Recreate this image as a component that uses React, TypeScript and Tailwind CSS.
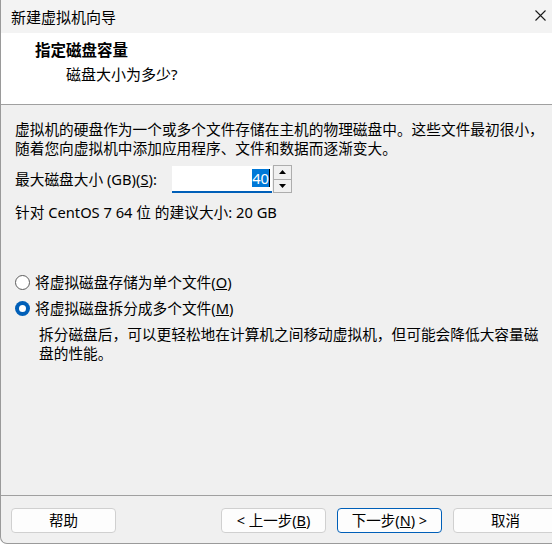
import React from 'react';

const font = { fontFamily: '"Noto Sans", "Noto Sans CJK SC", sans-serif' };

const Radio = ({ checked }: { checked?: boolean }) =>
  checked ? (
    <span className="flex h-[15px] w-[15px] items-center justify-center rounded-full bg-[#005fb8]">
      <span className="h-[7px] w-[7px] rounded-full bg-white"></span>
    </span>
  ) : (
    <span className="h-[15px] w-[15px] rounded-full border border-[#5c5c5c] bg-white"></span>
  );

const Btn = ({ children, focus, className = '' }: { children: React.ReactNode; focus?: boolean; className?: string }) => (
  <div
    className={`flex h-[25px] w-[105px] items-center justify-center rounded-[4px] bg-[#fdfdfd] text-[14.5px] text-black ${
      focus ? 'border border-[#005fb8]' : 'border border-[#d0d0d0]'
    } ${className}`}
  >
    {children}
  </div>
);

const App = () => {
  return (
    <div className="h-[546px] w-[552px] overflow-hidden bg-white" style={font}>
      <div className="flex h-[544px] w-[560px] flex-col overflow-hidden rounded-bl-[7px] border-b border-l border-[#9a9a9a] bg-[#f0f0f0]">
        {/* title bar */}
        <div className="flex h-[33px] shrink-0 items-center justify-between bg-[#f3f3f3] pl-[10px] pr-[14px]">
          <span className="mt-[1px] text-[15px] text-black">新建虚拟机向导</span>
          <svg width="11" height="11" viewBox="0 0 11 11" className="mt-[-3px]">
            <path d="M0.5 0.5 L10.5 10.5 M10.5 0.5 L0.5 10.5" stroke="#1a1a1a" strokeWidth="1.1" />
          </svg>
        </div>

        {/* header */}
        <div className="h-[72px] shrink-0 border-b border-[#a0a0a0] bg-white pl-[34px] pt-[6px]">
          <div className="text-[15.5px] font-bold leading-[22px] text-black">指定磁盘容量</div>
          <div className="pl-[31px] pt-[2px] text-[15px] leading-[22px] text-black">磁盘大小为多少?</div>
        </div>

        {/* body */}
        <div className="flex-1 pl-[14px] pt-[15px] text-[14.7px] text-black">
          <div className="leading-[19px]">
            <div className="whitespace-nowrap">虚拟机的硬盘作为一个或多个文件存储在主机的物理磁盘中。这些文件最初很小，</div>
            <div className="whitespace-nowrap">随着您向虚拟机中添加应用程序、文件和数据而逐渐变大。</div>
          </div>

          <div className="mt-[7px] flex items-center">
            <span className="w-[157px] whitespace-nowrap">
              最大磁盘大小 (GB)(<u>S</u>):
            </span>
            <div className="relative flex h-[27px] w-[100px] items-center justify-end border-b-2 border-[#005fb8] bg-white pr-[2px]">
              <span className="bg-[#0078d7] leading-[18px] text-white">40</span>
              <span className="h-[18px] w-px bg-black"></span>
            </div>
            <div className="ml-[1px] flex h-[28px] w-[19px] flex-col border border-[#adadad] bg-[#f0f0f0]">
              <div className="flex flex-1 items-center justify-center border-b border-[#adadad]">
                <svg width="7" height="4" viewBox="0 0 7 4">
                  <path d="M0 4 L3.5 0 L7 4 Z" fill="#000" />
                </svg>
              </div>
              <div className="flex flex-1 items-center justify-center">
                <svg width="7" height="4" viewBox="0 0 7 4">
                  <path d="M0 0 L3.5 4 L7 0 Z" fill="#000" />
                </svg>
              </div>
            </div>
          </div>

          <div className="mt-[10px] leading-[19px]">针对 CentOS 7 64 位 的建议大小: 20 GB</div>

          <div className="mt-[51px] flex items-center gap-[5px] leading-[19px]">
            <Radio />
            <span>
              将虚拟磁盘存储为单个文件(<u>O</u>)
            </span>
          </div>
          <div className="mt-[7px] flex items-center gap-[5px] leading-[19px]">
            <Radio checked />
            <span>
              将虚拟磁盘拆分成多个文件(<u>M</u>)
            </span>
          </div>
          <div className="mt-[7px] pl-[24px] leading-[19px]">
            <div className="whitespace-nowrap">拆分磁盘后，可以更轻松地在计算机之间移动虚拟机，但可能会降低大容量磁</div>
            <div>盘的性能。</div>
          </div>
        </div>

        {/* footer */}
        <div className="flex h-[48px] shrink-0 items-start border-t border-[#a0a0a0] pl-[10px] pt-[12px]">
          <Btn>帮助</Btn>
          <Btn className="ml-[105px]">
            &lt; 上一步(<u>B</u>)
          </Btn>
          <Btn focus className="ml-[11px]">
            下一步(<u>N</u>) &gt;
          </Btn>
          <Btn className="ml-[11px]">取消</Btn>
        </div>
      </div>
    </div>
  );
};

export default App;
